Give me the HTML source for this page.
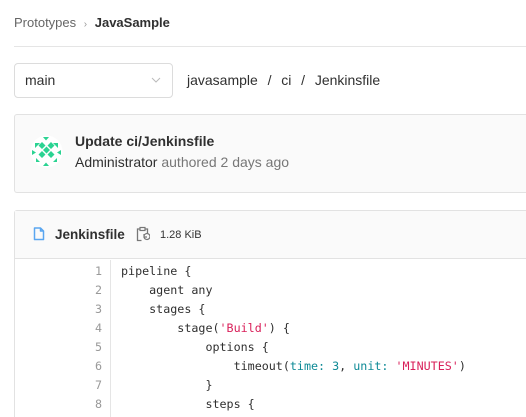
<!DOCTYPE html>
<html style="width:526px;height:417px;overflow:hidden"><head><style>
*{margin:0;padding:0;box-sizing:border-box}
body{width:526px;height:417px;overflow:hidden;background:#fff;font-family:"Segoe UI","Liberation Sans",sans-serif;color:#303030;position:relative}
.abs{position:absolute}
.code{font-family:"DejaVu Sans Mono","Liberation Mono",monospace;font-size:11.7px;}
.s{color:#d9205a}.k{color:#0e8a96}
</style></head><body>
<div class="abs" style="left:14px;top:15px;font-size:13px;color:#666">Prototypes <span style="color:#999;font-size:10px;margin:0 4px">&#8250;</span> <span style="color:#303030;font-weight:600">JavaSample</span></div>
<div class="abs" style="left:14px;top:46px;right:0;height:1px;background:#e5e5e5"></div>
<div class="abs" style="left:14px;top:63px;width:159px;height:35px;border:1px solid #dcdcdc;border-radius:4px"></div>
<div class="abs" style="left:25px;top:72px;font-size:14px">main</div>
<svg class="abs" style="left:151px;top:77px" width="10" height="6"><path d="M1 1l4 4 4-4" fill="none" stroke="#bbb" stroke-width="1"/></svg>
<div class="abs" style="left:187px;top:72px;font-size:14px;word-spacing:1px">javasample &nbsp;/ &nbsp;ci &nbsp;/ &nbsp;Jenkinsfile</div>
<div class="abs" style="left:14px;top:114px;width:512px;height:79px;border:1px solid #e2e2e2;border-right:none;border-radius:3px 0 0 3px;background:#fafafa"></div>
<svg class="abs" style="left:30px;top:135px" width="33" height="33" viewBox="0 0 33 33">
<circle cx="16.5" cy="16.5" r="16" fill="#fff"/>
<g fill="#2bd392">
<path d="M12 7l3.5 3.5-3.5 3.5-3.5-3.5z M21 7l3.5 3.5-3.5 3.5-3.5-3.5z M16.5 11.5l3.5 3.5-3.5 3.5-3.5-3.5z M12 16l3.5 3.5-3.5 3.5-3.5-3.5z M21 16l3.5 3.5-3.5 3.5-3.5-3.5z"/>
<path d="M5 8l5 0-5 5z M28 8l0 5-5-5z M2 15l4 2.5-4 2.5z M31 15l0 5-4-2.5z M6 27l4 0-4-4z M27 27l-4 0 4-4z M13 2l6 0-3 3.5z M13 31l6 0-3-3.5z"/>
</g></svg>
<div class="abs" style="left:75px;top:133px;font-size:14px;font-weight:600">Update ci/Jenkinsfile</div>
<div class="abs" style="left:75px;top:154px;font-size:14px">Administrator <span style="color:#777">authored 2 days ago</span></div>
<div class="abs" style="left:14px;top:210px;width:512px;height:207px;border:1px solid #e2e2e2;border-right:none;border-bottom:none;border-radius:3px 0 0 0"></div>
<div class="abs" style="left:15px;top:211px;width:511px;height:48px;background:#fafafa;border-bottom:1px solid #e2e2e2"></div>
<svg class="abs" style="left:33px;top:227px" width="12" height="14" viewBox="0 0 12 14"><path d="M1.5 1h6l3 3v8.5h-9z M7.5 1v3h3" fill="none" stroke="#5aa6f0" stroke-width="1.5" stroke-linejoin="round"/></svg>
<div class="abs" style="left:55px;top:227px;font-size:13.5px;font-weight:700;color:#303030">Jenkinsfile</div>
<svg class="abs" style="left:136px;top:226px" width="14" height="16" viewBox="0 0 14 16"><path d="M4 3H1.5v11.5h4 M9 3h2.5v4" fill="none" stroke="#777" stroke-width="1.3"/><rect x="4" y="1.5" width="5" height="3" fill="none" stroke="#777" stroke-width="1.2"/><path d="M8 10a3 3 0 1 1 0 1 M8 8v3h3" fill="none" stroke="#777" stroke-width="1.2"/></svg>
<div class="abs" style="left:160px;top:229px;font-size:11px;color:#333">1.28 KiB</div>
<div class="abs" style="left:110px;top:260px;width:1px;height:157px;background:#e5e5e5"></div>
<div class="abs code" style="left:0;top:262px;width:526px;line-height:19px">
<div class="abs" style="left:82px;width:20px;top:0;text-align:right;color:#999">1<br>2<br>3<br>4<br>5<br>6<br>7<br>8</div>
<div class="abs" style="left:121px;top:0;white-space:pre;color:#303030">pipeline {
    agent any
    stages {
        stage(<span class="s">'Build'</span>) {
            options {
                timeout(<span class="k">time:</span> <span class="k">3</span>, <span class="k">unit:</span> <span class="s">'MINUTES'</span>)
            }
            steps {</div>
</div>
</body></html>
